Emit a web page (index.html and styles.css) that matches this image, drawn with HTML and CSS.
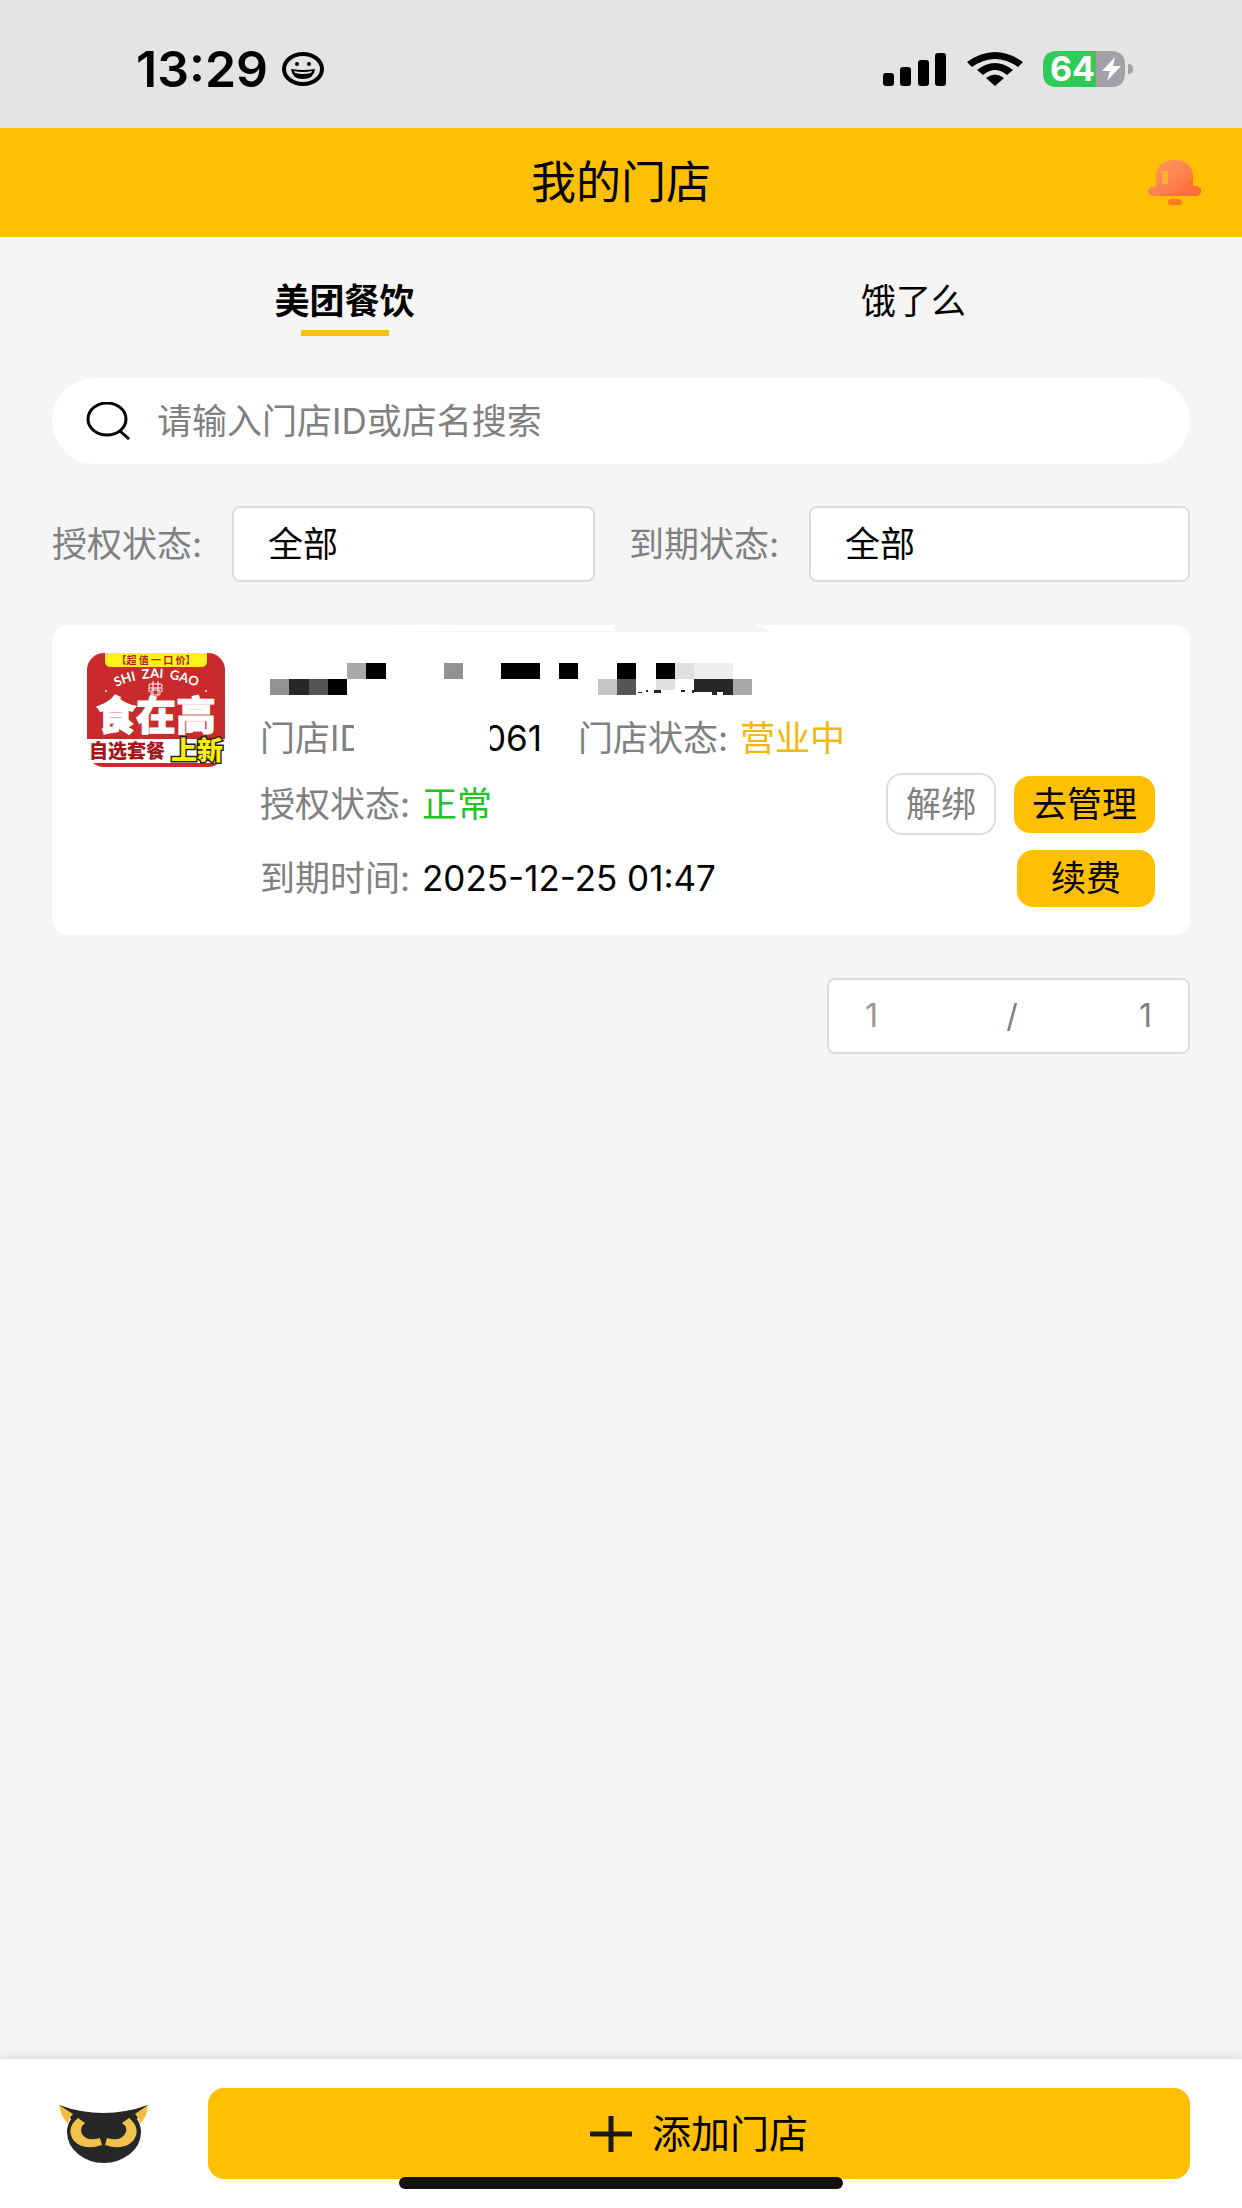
FILE: index.html
```
<!DOCTYPE html>
<html lang="zh-CN">
<head>
    <meta charset="UTF-8">
    <meta name="viewport" content="width=device-width, initial-scale=1.0">
    <title>我的门店</title>
    <link rel="stylesheet" href="styles.css">
</head>
<body>
<div id="statusbar">
    <span class="time">13:29</span>
    <svg class="smile" width="42" height="36" viewBox="0 0 42 36">
        <ellipse cx="21" cy="18" rx="19" ry="15" fill="none" stroke="#000" stroke-width="4"/>
        <circle cx="15" cy="13" r="2"/>
        <circle cx="27" cy="13" r="2"/>
        <path d="M9 18Q21 20 33 18Q32 28 21 28Q10 28 9 18Z"/>
        <path d="M12 20Q21 22 30 20L29 22Q21 24 13 22Z" fill="#e4e4e4"/>
    </svg>
    <span class="status_icons">
        <svg width="64" height="33" viewBox="0 0 64 33">
            <rect x="0" y="20" width="11" height="13" rx="3"/>
            <rect x="17" y="14" width="11" height="19" rx="3"/>
            <rect x="35" y="7" width="11" height="26" rx="3"/>
            <rect x="52" y="0" width="11" height="33" rx="3"/>
        </svg>
        <svg width="56" height="34" viewBox="0 0 56 34">
            <path d="M0 10Q28 -10 56 10L51 15Q28 -1 5 15Z"/>
            <path d="M10 18Q28 4 46 18L40 23Q28 13 16 23Z"/>
            <path d="M19 26Q28 19 37 26L28 34Z"/>
        </svg>
        <svg class="battery" width="90" height="36" viewBox="0 0 90 36">
            <path d="M14 0H53V36H14Q0 36 0 22V14Q0 0 14 0Z" fill="#30cb57"/>
            <path d="M53 0H68Q82 0 82 14V22Q82 36 68 36H53Z" fill="#a3a1a6"/>
            <path d="M85 13Q90 13 90 18Q90 23 85 23Z" fill="#a3a1a6"/>
            <text x="7" y="30" class="battery_text">64</text>
            <path d="M72 6L59 20H67L64 30L78 15H70Z" fill="#fff"/>
        </svg>
    </span>
</div>

<header id="header">
    <h1>我的门店</h1>
    <button class="bell" type="button" aria-label="消息">
        <svg width="54" height="46" viewBox="0 0 54 46">
            <defs>
                <linearGradient id="bell" x1="0" y1="0" x2="1" y2="1">
                    <stop offset="0" stop-color="#ff9a5c"/>
                    <stop offset=".5" stop-color="#ff8350"/>
                    <stop offset="1" stop-color="#ff6a38"/>
                </linearGradient>
            </defs>
            <path d="M8 26V18Q8 0 27 0Q45 0 45 18V26H48Q54 28 53 32Q52 36 46 36H7Q0 36 0 31Q0 27 8 26Z" fill="url(#bell)"/>
            <path d="M45 16V26H48Q54 28 53 32Q52 36 46 36H8Q36 35 45 16Z" fill="#ff6f3c"/>
            <rect x="14" y="11" width="6" height="13" rx="1" fill="#ffb02e"/>
            <rect x="20" y="39" width="14" height="6" rx="3" fill="#ff7a1e"/>
        </svg>
    </button>
</header>

<main id="main">
    <nav class="tabs">
        <a href="#meituan" class="tab selected">美团餐饮</a>
        <a href="#eleme" class="tab">饿了么</a>
    </nav>

    <label class="search">
        <svg width="44" height="38" viewBox="0 0 44 38" fill="none" stroke="#000" stroke-width="3">
            <ellipse cx="21" cy="17" rx="19" ry="16"/>
            <path d="M34 29L43 37"/>
        </svg>
        <input type="text" placeholder="请输入门店ID或店名搜索" aria-label="搜索门店">
    </label>

    <div class="filters">
        <label for="auth">授权状态:</label>
        <select id="auth">
            <option>全部</option>
        </select>
        <label for="expire">到期状态:</label>
        <select id="expire">
            <option>全部</option>
        </select>
    </div>

    <section class="card">
        <svg class="smudge" width="402" height="8" viewBox="0 0 402 8">
            <path d="M0 7L90 6H242L246 0H384L402 7Z" fill="#f5f5f5"/>
        </svg>
        <svg class="logo" width="138" height="114" viewBox="0 0 138 114">
            <defs>
                <clipPath id="logo_clip"><rect width="138" height="114" rx="17"/></clipPath>
                <path id="arc" d="M21 38Q69 12 118 38"/>
            </defs>
            <g clip-path="url(#logo_clip)">
                <rect width="138" height="114" fill="#c92a2b"/>
                <path d="M18 0H120V8Q120 14 114 14H24Q18 14 18 8Z" fill="#fff01a"/>
            </g>
            <text x="69" y="11" class="logo_top">【超 值 一 口 价】</text>
            <text class="logo_arc"><textPath href="#arc" startOffset="50%">SHI &#160;ZAI &#160;GAO</textPath></text>
            <circle cx="19" cy="38" r="1" fill="#fff"/>
            <circle cx="119" cy="38" r="1" fill="#fff"/>
            <g fill="none" stroke="#fff" stroke-width="1">
                <rect x="62" y="31" width="13" height="4" rx="1"/>
                <rect x="64" y="37" width="9" height="5" rx="1"/>
                <path d="M66 28V42M71 28V42M62 35V39M75 35V39"/>
            </g>
            <text x="69" y="77" class="logo_name">食在高</text>
            <rect y="86" width="138" height="24" fill="#fff"/>
            <text x="2" y="105" class="logo_sub">自选套餐</text>
            <text x="84" y="107" class="logo_new">上新</text>
        </svg>

        <div class="info">
            <svg class="mosaic" width="482" height="32" viewBox="0 0 25 2" preserveAspectRatio="none" shape-rendering="crispEdges">
                <path d="M5 0h1v1h-1zM12 0h2v1h-2zM15 0h1v1h-1zM18 0h1v1h-1zM20 0h1v1h-1zM3 1h1v1h-1z"/>
                <path d="M1 1h1v1h-1zM22 1h2v1h-2z" fill="#272727"/>
                <path d="M2 1h1v1h-1zM18 1h1v1h-1z" fill="#555"/>
                <path d="M9 0h1v1h-1zM0 1h1v1h-1z" fill="#929292"/>
                <path d="M4 0h1v1h-1zM24 1h1v1h-1z" fill="#a9a9a9"/>
                <path d="M17 1h1v1h-1z" fill="#c5c5c5"/>
                <path d="M21 0h1v1h-1zM20 1h1v.7h-1z" fill="#dfdfdf"/>
                <path d="M22 0h2v1h-2z" fill="#eee"/>
                <path d="M19.1 1.8h.2v.1h-.2zM19.5 1.7h.1v.1h-.1zM19.9 1.7h.4v.2h-.4zM21.3 1.7h.2v.1h-.2zM21.9 1.7h.2v.2h-.2z" fill="#222"/>
                <path d="M22 1.8h.9v.2h-.9zM23.2 1.8h.3v.2h-.3z" fill="#fff"/>
            </svg>
            <div class="row row_id">
                <span class="id_label">门店ID</span>
                <span class="id_value">061</span>
                <span class="key">门店状态:</span>
                <span class="open">营业中</span>
            </div>
            <div class="row row_auth">
                <span class="key">授权状态:</span>
                <span class="ok">正常</span>
                <span class="actions">
                    <button class="btn btn_plain" type="button">解绑</button>
                    <button class="btn" type="button">去管理</button>
                </span>
            </div>
            <div class="row row_expire">
                <span class="key">到期时间:</span>
                <time datetime="2025-12-25T01:47">2025-12-25 01:47</time>
                <span class="actions">
                    <button class="btn btn_wide" type="button">续费</button>
                </span>
            </div>
        </div>
    </section>

    <div class="pager">
        <input type="text" value="1" aria-label="页码">
        <span>/</span>
        <span>1</span>
    </div>
</main>

<footer id="footer">
    <a href="#service" class="owl" aria-label="客服">
        <svg width="90" height="58" viewBox="0 0 90 58">
            <path d="M0 0Q44 16 89 0L78 14Q82 20 82 27Q82 40 71 49Q59 58 45 58Q30 58 19 49Q8 40 8 27Q8 20 12 14Z" fill="#272727"/>
            <path d="M0 0L14 9Q10 13 9 19Q2 12 0 0ZM89 0L76 9Q80 13 81 19Q88 12 89 0Z" fill="#f2bd3e"/>
            <path d="M19 13L26 18Q20 23 23 29Q28 37 41 33L43 40Q25 46 15 36Q6 24 19 13ZM70 13L63 18Q70 23 66 29Q61 37 48 33L46 40Q64 46 74 36Q83 24 70 13Z" fill="#f2c14a"/>
        </svg>
    </a>
    <button class="add" type="button">
        <svg width="42" height="36" viewBox="0 0 42 36" stroke="#1d1a16" stroke-width="5">
            <path d="M0 18H42M21 0V36"/>
        </svg>
        添加门店
    </button>
    <span class="home_bar"></span>
</footer>
</body>
</html>
```
FILE: styles.css
```
* {
    box-sizing: border-box;
}

body {
    margin: 0;
    min-height: 100vh;
    display: flex;
    flex-direction: column;
    background-color: #f5f5f5;
    color: #000;
    font-family: Inter, "Noto Sans CJK SC", sans-serif;
    font-size: 35px;
    line-height: 48px;
}

svg {
    display: block;
    flex: none;
}

button, input, select {
    font: inherit;
    color: inherit;
    margin: 0;
    border: none;
    outline: none;
}

button {
    cursor: pointer;
}

a {
    color: inherit;
    text-decoration: none;
}

/* status bar */
#statusbar {
    display: flex;
    align-items: center;
    height: 128px;
    padding: 10px 109px 0 136px;
    background-color: #e4e4e4;
}

.time {
    font-size: 50px;
    font-weight: 600;
}

.smile {
    margin-left: 14px;
}

.status_icons {
    display: flex;
    align-items: center;
    gap: 20px;
    margin-left: auto;
}

.battery {
    overflow: visible;
}

.battery_text {
    font-size: 34px;
    font-weight: 700;
    fill: #fff;
}

/* title */
#header {
    position: relative;
    display: flex;
    align-items: center;
    justify-content: center;
    height: 109px;
    background-color: #ffc003;
}

#header h1 {
    margin: 0;
    font-size: 45px;
    font-weight: 400;
}

.bell {
    position: absolute;
    right: 40px;
    padding: 0;
    background: none;
}

#main {
    flex: 1;
    padding: 0 52px;
}

/* tabs */
.tabs {
    display: flex;
    margin: 40px -8px 0 8px;
}

.tab {
    flex: 1;
    display: flex;
    flex-direction: column;
    align-items: center;
    height: 59px;
}

.tab.selected {
    font-weight: 700;
}

.tab.selected::after {
    content: "";
    width: 88px;
    height: 6px;
    margin-top: 5px;
    background-color: #ffc003;
}

.search {
    display: flex;
    align-items: center;
    gap: 27px;
    height: 86px;
    margin-top: 42px;
    padding: 0 34px;
    border-radius: 43px;
    background-color: #fff;
}

.search input {
    flex: 1;
    min-width: 0;
    padding: 0;
    background: none;
}

.search input::placeholder {
    color: #808080;
    opacity: 1;
}

/* filters */
.filters {
    display: grid;
    grid-template-columns: 180px 20fr 34px 180px 21fr;
    align-items: center;
    margin-top: 42px;
    color: #808080;
}

.filters select {
    height: 76px;
    padding: 0 34px;
    border: 2px solid #dcdcdc;
    border-radius: 8px;
    background-color: #fff;
    color: #000;
    appearance: none;
}

.filters select + label {
    grid-column: 4;
}

/* shop card */
.card {
    position: relative;
    display: flex;
    gap: 35px;
    margin-top: 43px;
    padding: 28px 35px;
    border-radius: 16px;
    background-color: #fff;
}

.smudge {
    position: absolute;
    top: 0;
    left: 318px;
}

.logo {
    overflow: visible;
}

.logo text {
    font-family: "Noto Sans CJK SC", sans-serif;
}

.logo .logo_top {
    font-size: 10px;
    font-weight: 700;
    text-anchor: middle;
    fill: #a52a1c;
}

.logo .logo_arc {
    font-family: Lato, sans-serif;
    font-size: 13px;
    font-weight: 700;
    text-anchor: middle;
    fill: #fff;
}

.logo .logo_name {
    font-size: 40px;
    font-weight: 900;
    text-anchor: middle;
    fill: #fff;
    stroke: #fff;
    stroke-width: 1px;
}

.logo .logo_sub {
    font-size: 19px;
    font-weight: 900;
    fill: #a8141a;
}

.logo .logo_new {
    font-size: 26px;
    font-weight: 900;
    fill: #ffee00;
    stroke: #222;
    stroke-width: 3px;
    paint-order: stroke;
}

.info {
    flex: 1;
    padding-top: 10px;
}

.mosaic {
    margin: 0 0 16px 10px;
}

.row {
    display: flex;
    align-items: center;
    white-space: nowrap;
}

.row_id {
    height: 54px;
}

.row_auth {
    height: 62px;
    margin-top: 8px;
}

.row_expire {
    height: 58px;
    margin-top: 14px;
}

.key, .id_label {
    color: #808080;
}

.key {
    width: 162px;
}

/* the shop id is partly hidden */
.id_label {
    width: 94px;
    overflow: hidden;
}

.id_value {
    display: flex;
    justify-content: flex-end;
    width: 52px;
    margin: 0 36px 0 136px;
    overflow: hidden;
}

.open {
    color: #f0b90b;
}

.ok {
    color: #22c322;
}

.actions {
    display: flex;
    align-items: center;
    gap: 18px;
    margin-left: auto;
}

.btn {
    height: 57px;
    padding: 0 18px;
    border-radius: 16px;
    background-color: #ffc003;
}

.btn_wide {
    padding: 0 34px;
}

.btn_plain {
    height: 62px;
    border: 2px solid #dcdcdc;
    background-color: #fff;
    color: #808080;
}

.pager {
    display: flex;
    align-items: center;
    justify-content: space-between;
    width: 363px;
    height: 76px;
    margin: 43px 0 0 auto;
    padding: 0 36px;
    border: 2px solid #dcdcdc;
    border-radius: 8px;
    background-color: #fff;
    color: #808080;
    font-size: 32px;
}

.pager input {
    width: 20px;
    padding: 0;
    background: none;
    color: #999;
}

/* bottom bar */
#footer {
    position: sticky;
    bottom: 0;
    display: flex;
    align-items: center;
    gap: 59px;
    padding: 29px 52px 29px 59px;
    background-color: #fff;
    box-shadow: 0 -2px 10px rgba(0, 0, 0, .12);
}

.add {
    flex: 1;
    display: flex;
    align-items: center;
    justify-content: center;
    gap: 20px;
    height: 91px;
    border-radius: 16px;
    background-color: #ffc003;
    font-size: 39px;
}

.home_bar {
    position: absolute;
    bottom: 19px;
    left: 50%;
    width: 444px;
    height: 12px;
    margin-left: -222px;
    border-radius: 6px;
    background-color: #15110e;
}
```
